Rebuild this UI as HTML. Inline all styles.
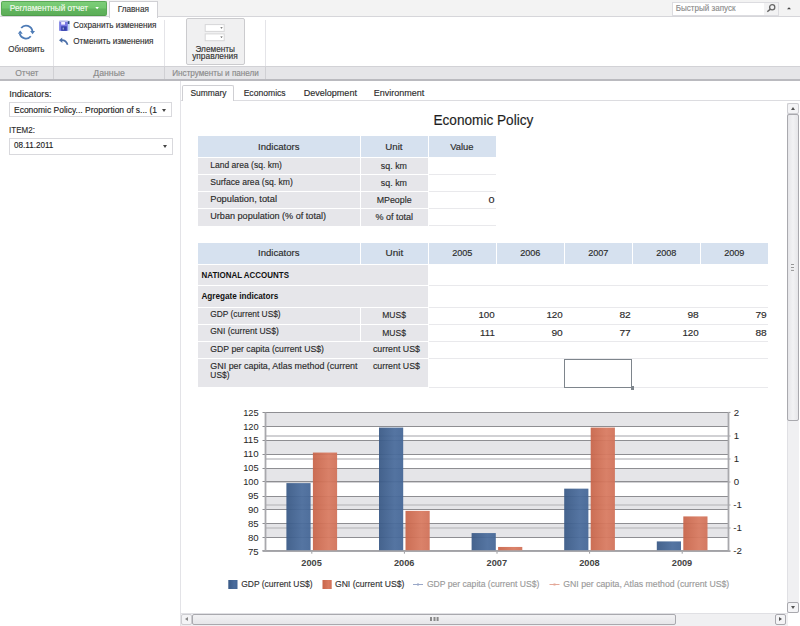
<!DOCTYPE html>
<html><head><meta charset="utf-8">
<style>
*{margin:0;padding:0;box-sizing:border-box}
html,body{width:800px;height:626px;overflow:hidden;background:#fff;font-family:"Liberation Sans",sans-serif;color:#2a2a2a}
.a{position:absolute}
</style></head><body>
<div class="a" style="left:0px;top:0px;width:800px;height:17px;background:#f3f3f3;border-bottom:1px solid #d6d6da"></div>
<div class="a" style="left:1px;top:1px;width:106px;height:15px;border-radius:2px;background:linear-gradient(#7ccd78,#72c76e 48%,#62b55e 52%,#5cae58);border:1px solid #5aa956;border-bottom-color:#4f9c4b"></div>
<div class="a" style="left:109px;top:1px;width:49px;height:17px;background:#fff;border:1px solid #d0d0d4;border-bottom:none"></div>
<div class="a" style="left:672px;top:2px;width:107px;height:14px;background:#fff;border:1px solid #dcdce0"></div>
<div class="a" style="left:764px;top:3px;width:14px;height:12px;background:#f2f2f3"></div>
<div class="a" style="left:53px;top:20px;width:1px;height:46px;background:#e4e4e8"></div>
<div class="a" style="left:164px;top:20px;width:1px;height:46px;background:#e4e4e8"></div>
<div class="a" style="left:265px;top:20px;width:1px;height:46px;background:#e4e4e8"></div>
<div class="a" style="left:0px;top:66px;width:800px;height:15px;background:#e5e5e8;border-top:1px solid #d2d2d6;border-bottom:2px solid #bababf"></div>
<div class="a" style="left:53px;top:67px;width:1px;height:12px;background:#d0d0d4"></div>
<div class="a" style="left:164px;top:67px;width:1px;height:12px;background:#d0d0d4"></div>
<div class="a" style="left:265px;top:67px;width:1px;height:12px;background:#d0d0d4"></div>
<div class="a" style="left:186px;top:18px;width:59px;height:47px;border:1px solid #cbcbce;border-radius:2px;background:#f0f0f1"></div>
<svg class="a" style="left:0;top:0" width="800" height="66" viewBox="0 0 800 66">
<g fill="none" stroke="#4d7bb6" stroke-width="1.8">
<path d="M21.2,28 A6.3,6.3 0 0 1 32.4,31.2"/>
<path d="M30.8,36.3 A6.3,6.3 0 0 1 19.8,33.9"/>
</g>
<g fill="#4d7bb6">
<path d="M30.1,30.9 L35,30.9 L32.6,34.3 Z"/>
<path d="M17.8,33.8 L22.7,33.8 L20.2,30.6 Z"/>
</g>
<!-- save -->
<rect x="59.2" y="20.8" width="10.6" height="10" rx="1" fill="#c4daf2"/>
<rect x="59.2" y="20.8" width="8.6" height="10" fill="#7a7ae4"/>
<rect x="59.2" y="20.8" width="10.6" height="1" fill="#c8cce8"/>
<rect x="61.2" y="22" width="3.8" height="2.6" fill="#f2f2ff"/>
<rect x="61.2" y="26.3" width="5.6" height="4.5" fill="#3440a8"/>
<rect x="62.6" y="27.6" width="1.4" height="2" fill="#9aa0d0"/>
<rect x="67.8" y="21.2" width="1.6" height="2.8" fill="#2a4a7a"/>
<!-- undo -->
<path d="M61.5,40.2 Q66,40 67.6,44.8" fill="none" stroke="#4a6ea8" stroke-width="1.7"/>
<path d="M59,40.3 L62.2,37.6 L62.4,43 Z" fill="#4a6ea8"/>
<!-- mini combos -->
<rect x="205.2" y="24.6" width="19" height="6.8" fill="#fff" stroke="#d6d6d8" stroke-width="1"/>
<rect x="205.2" y="33.9" width="19" height="6.8" fill="#fff" stroke="#d6d6d8" stroke-width="1"/>
<path d="M220.3,27.2 L222.7,27.2 L221.5,28.8 Z" fill="#555"/>
<path d="M220.3,36.5 L222.7,36.5 L221.5,38.1 Z" fill="#555"/>
<!-- search -->
<circle cx="772.2" cy="7.2" r="2.6" fill="none" stroke="#666" stroke-width="1.3"/>
<path d="M770.4,9.1 L767.3,11.8" stroke="#666" stroke-width="1.5"/>
<path d="M787,9.3 L791,9.3 L789,7.3 Z" fill="#444"/>
<path d="M95.3,7 L98.9,7 L97.1,9.2 Z" fill="#fff"/>
</svg>

<div class="a" style="left:180px;top:81px;width:1px;height:545px;background:#e3e3e7"></div>
<div class="a" style="left:9px;top:102px;width:163px;height:15px;border:1px solid #d9d9dd;background:#fff"></div>
<div class="a" style="left:162px;top:109px;border-left:2.5px solid transparent;border-right:2.5px solid transparent;border-top:3px solid #444"></div>
<div class="a" style="left:9px;top:138px;width:164px;height:17px;border:1px solid #d9d9dd;background:#fff"></div>
<div class="a" style="left:162.5px;top:145px;border-left:2.5px solid transparent;border-right:2.5px solid transparent;border-top:3px solid #444"></div>
<div class="a" style="left:181px;top:100px;width:619px;height:1px;background:#dcdce0"></div>
<div class="a" style="left:182px;top:85px;width:52px;height:16px;background:#fff;border:1px solid #cfcfd3;border-bottom:none;border-radius:2px 2px 0 0"></div>
<div class="a" style="left:198px;top:136px;width:162px;height:21px;background:#d6e1ef"></div>
<div class="a" style="left:361px;top:136px;width:67px;height:21px;background:#d6e1ef"></div>
<div class="a" style="left:429px;top:136px;width:67px;height:21px;background:#d6e1ef"></div>
<div class="a" style="left:198px;top:158px;width:162px;height:16px;background:#e6e6ea"></div>
<div class="a" style="left:361px;top:158px;width:67px;height:16px;background:#e6e6ea"></div>
<div class="a" style="left:429px;top:174px;width:67px;height:1px;background:#e9e9ec"></div>
<div class="a" style="left:198px;top:175px;width:162px;height:16px;background:#e6e6ea"></div>
<div class="a" style="left:361px;top:175px;width:67px;height:16px;background:#e6e6ea"></div>
<div class="a" style="left:429px;top:191px;width:67px;height:1px;background:#e9e9ec"></div>
<div class="a" style="left:198px;top:192px;width:162px;height:16px;background:#e6e6ea"></div>
<div class="a" style="left:361px;top:192px;width:67px;height:16px;background:#e6e6ea"></div>
<div class="a" style="left:429px;top:208px;width:67px;height:1px;background:#e9e9ec"></div>
<div class="a" style="left:198px;top:209px;width:162px;height:17px;background:#e6e6ea"></div>
<div class="a" style="left:361px;top:209px;width:67px;height:17px;background:#e6e6ea"></div>
<div class="a" style="left:429px;top:225px;width:67px;height:1px;background:#e9e9ec"></div>
<div class="a" style="left:198px;top:243px;width:162px;height:21px;background:#d6e1ef"></div>
<div class="a" style="left:361px;top:243px;width:67px;height:21px;background:#d6e1ef"></div>
<div class="a" style="left:429px;top:243px;width:67px;height:21px;background:#d6e1ef"></div>
<div class="a" style="left:497px;top:243px;width:67px;height:21px;background:#d6e1ef"></div>
<div class="a" style="left:565px;top:243px;width:67px;height:21px;background:#d6e1ef"></div>
<div class="a" style="left:633px;top:243px;width:67px;height:21px;background:#d6e1ef"></div>
<div class="a" style="left:701px;top:243px;width:67px;height:21px;background:#d6e1ef"></div>
<div class="a" style="left:198px;top:265px;width:230px;height:20px;background:#e6e6ea"></div>
<div class="a" style="left:198px;top:286px;width:230px;height:21px;background:#e6e6ea"></div>
<div class="a" style="left:198px;top:308px;width:162px;height:16px;background:#e6e6ea"></div>
<div class="a" style="left:361px;top:308px;width:67px;height:16px;background:#e6e6ea"></div>
<div class="a" style="left:198px;top:325px;width:162px;height:16px;background:#e6e6ea"></div>
<div class="a" style="left:361px;top:325px;width:67px;height:16px;background:#e6e6ea"></div>
<div class="a" style="left:198px;top:342px;width:230px;height:16px;background:#e6e6ea"></div>
<div class="a" style="left:198px;top:359px;width:230px;height:28px;background:#e6e6ea"></div>
<div class="a" style="left:429px;top:285px;width:339px;height:1px;background:#e9e9ec"></div>
<div class="a" style="left:429px;top:307px;width:339px;height:1px;background:#e9e9ec"></div>
<div class="a" style="left:429px;top:324px;width:339px;height:1px;background:#e9e9ec"></div>
<div class="a" style="left:429px;top:341px;width:339px;height:1px;background:#e9e9ec"></div>
<div class="a" style="left:429px;top:358px;width:339px;height:1px;background:#e9e9ec"></div>
<div class="a" style="left:429px;top:387px;width:339px;height:1px;background:#e9e9ec"></div>
<div class="a" style="left:564px;top:359px;width:68px;height:29px;border:1px solid #7e858c;border-bottom-width:1.5px"></div>
<div class="a" style="left:630.5px;top:386px;width:3.5px;height:3.5px;background:#7e858c"></div>
<svg class="a" style="left:0;top:0" width="800" height="626" viewBox="0 0 800 626">
<defs><linearGradient id="gb" x1="0" x2="1" y1="0" y2="0"><stop offset="0" stop-color="#395986"/><stop offset="0.65" stop-color="#4a6c9c"/><stop offset="1" stop-color="#446696"/></linearGradient>
<linearGradient id="gr" x1="0" x2="1" y1="0" y2="0"><stop offset="0" stop-color="#c8654a"/><stop offset="0.65" stop-color="#d87a60"/><stop offset="1" stop-color="#d17158"/></linearGradient></defs>
<rect x="265.5" y="412.5" width="463.0" height="14.0" fill="#e5e5e8"/>
<rect x="265.5" y="440.5" width="463.0" height="14.0" fill="#e5e5e8"/>
<rect x="265.5" y="468.5" width="463.0" height="13.0" fill="#e5e5e8"/>
<rect x="265.5" y="496.5" width="463.0" height="13.0" fill="#e5e5e8"/>
<rect x="265.5" y="523.5" width="463.0" height="14.0" fill="#e5e5e8"/>
<line x1="265.5" x2="730.5" y1="436" y2="436" stroke="#c2c2c6" stroke-width="1.5"/>
<line x1="265.5" x2="730.5" y1="459" y2="459" stroke="#c2c2c6" stroke-width="1.5"/>
<line x1="265.5" x2="730.5" y1="482" y2="482" stroke="#c2c2c6" stroke-width="1.5"/>
<line x1="265.5" x2="730.5" y1="505" y2="505" stroke="#c2c2c6" stroke-width="1.5"/>
<line x1="265.5" x2="730.5" y1="528" y2="528" stroke="#c2c2c6" stroke-width="1.5"/>
<line x1="262.5" x2="728.5" y1="412.5" y2="412.5" stroke="#8e8e92" stroke-width="1"/>
<line x1="262.5" x2="728.5" y1="426.5" y2="426.5" stroke="#8e8e92" stroke-width="1"/>
<line x1="262.5" x2="728.5" y1="440.5" y2="440.5" stroke="#8e8e92" stroke-width="1"/>
<line x1="262.5" x2="728.5" y1="454.5" y2="454.5" stroke="#8e8e92" stroke-width="1"/>
<line x1="262.5" x2="728.5" y1="468.5" y2="468.5" stroke="#8e8e92" stroke-width="1"/>
<line x1="262.5" x2="728.5" y1="481.5" y2="481.5" stroke="#8e8e92" stroke-width="1"/>
<line x1="262.5" x2="728.5" y1="496.5" y2="496.5" stroke="#8e8e92" stroke-width="1"/>
<line x1="262.5" x2="728.5" y1="509.5" y2="509.5" stroke="#8e8e92" stroke-width="1"/>
<line x1="262.5" x2="728.5" y1="523.5" y2="523.5" stroke="#8e8e92" stroke-width="1"/>
<line x1="262.5" x2="728.5" y1="537.5" y2="537.5" stroke="#8e8e92" stroke-width="1"/>
<line x1="262.5" x2="728.5" y1="550.5" y2="550.5" stroke="#8e8e92" stroke-width="1"/>
<line x1="728.5" x2="730.5" y1="412.4" y2="412.4" stroke="#8e8e92" stroke-width="1"/>
<rect x="286.40" y="483.10" width="24.2" height="68.10" fill="url(#gb)" opacity="0.94"/>
<rect x="312.90" y="452.56" width="24.2" height="98.64" fill="url(#gr)" opacity="0.94"/>
<line x1="311.80" x2="311.80" y1="551.2" y2="553.7" stroke="#9a9a9e" stroke-width="1"/>
<rect x="379.00" y="427.58" width="24.2" height="123.62" fill="url(#gb)" opacity="0.94"/>
<rect x="405.50" y="510.86" width="24.2" height="40.34" fill="url(#gr)" opacity="0.94"/>
<line x1="404.40" x2="404.40" y1="551.2" y2="553.7" stroke="#9a9a9e" stroke-width="1"/>
<rect x="471.60" y="533.07" width="24.2" height="18.13" fill="url(#gb)" opacity="0.94"/>
<rect x="498.10" y="546.95" width="24.2" height="4.25" fill="url(#gr)" opacity="0.94"/>
<line x1="497.00" x2="497.00" y1="551.2" y2="553.7" stroke="#9a9a9e" stroke-width="1"/>
<rect x="564.20" y="488.65" width="24.2" height="62.55" fill="url(#gb)" opacity="0.94"/>
<rect x="590.70" y="427.58" width="24.2" height="123.62" fill="url(#gr)" opacity="0.94"/>
<line x1="589.60" x2="589.60" y1="551.2" y2="553.7" stroke="#9a9a9e" stroke-width="1"/>
<rect x="656.80" y="541.40" width="24.2" height="9.80" fill="url(#gb)" opacity="0.94"/>
<rect x="683.30" y="516.41" width="24.2" height="34.79" fill="url(#gr)" opacity="0.94"/>
<line x1="682.20" x2="682.20" y1="551.2" y2="553.7" stroke="#9a9a9e" stroke-width="1"/>
<line x1="265.5" x2="265.5" y1="412.4" y2="551.2" stroke="#a8a8ac" stroke-width="1.8"/>
<line x1="728.5" x2="728.5" y1="412.4" y2="551.2" stroke="#a8a8ac" stroke-width="1.8"/>
<line x1="262.5" x2="730.5" y1="551.2" y2="551.2" stroke="#a8a8ac" stroke-width="1.8"/>
<rect x="228.3" y="580" width="9.2" height="9" fill="url(#gb)"/>
<rect x="322.5" y="580" width="9.2" height="9" fill="url(#gr)"/>
<line x1="413" x2="423" y1="584.5" y2="584.5" stroke="#9aa8c8" stroke-width="1"/><rect x="417" y="583.5" width="2" height="2" fill="#9aa8c8"/>
<line x1="549.5" x2="559.5" y1="584.5" y2="584.5" stroke="#e4a898" stroke-width="1"/><rect x="553.5" y="583.5" width="2" height="2" fill="#e4a898"/>
</svg>
<div class="a" style="left:787px;top:103px;width:12px;height:510px;background:#f0f0f2;border-left:1px solid #e0e0e4"></div>
<div class="a" style="left:787px;top:103px;width:12px;height:11px;background:#f4f4f6;border:1px solid #cdcdd1;border-radius:2px"></div>
<div class="a" style="left:791px;top:107px;border-left:2.5px solid transparent;border-right:2.5px solid transparent;border-bottom:3px solid #555"></div>
<div class="a" style="left:787px;top:114px;width:12px;height:307px;background:linear-gradient(90deg,#e6e6e9,#f2f2f4 50%,#e6e6e9);border:1px solid #a9a9ae;border-radius:2px"></div>
<div class="a" style="left:787px;top:602px;width:12px;height:11px;background:#f4f4f6;border:1px solid #a9a9ae;border-radius:2px"></div>
<div class="a" style="left:791px;top:606px;border-left:2.5px solid transparent;border-right:2.5px solid transparent;border-top:3px solid #555"></div>
<div class="a" style="left:181px;top:613px;width:607px;height:13px;background:#f0f0f2;border-top:1px solid #e0e0e4"></div>
<div class="a" style="left:181px;top:614px;width:11px;height:11px;background:#f4f4f6;border:1px solid #cdcdd1;border-radius:2px"></div>
<div class="a" style="left:185px;top:617px;border-top:2.5px solid transparent;border-bottom:2.5px solid transparent;border-right:3px solid #888"></div>
<div class="a" style="left:192px;top:614px;width:484px;height:11px;background:linear-gradient(#f2f2f4,#e6e6e9);border:1px solid #a9a9ae;border-radius:2px"></div>
<div class="a" style="left:430.2px;top:617px;width:1.5px;height:4px;background:#8a8a8a;box-shadow:3.5px 0 #8a8a8a,6.6px 0 #8a8a8a"></div>
<div class="a" style="left:790.6px;top:264.3px;width:3.6px;height:1.1px;background:#969696;box-shadow:0 3px #969696,0 5.9px #969696"></div>
<div class="a" style="left:775px;top:614px;width:11px;height:11px;background:#f4f4f6;border:1px solid #a9a9ae;border-radius:2px"></div>
<div class="a" style="left:779px;top:617px;border-top:2.5px solid transparent;border-bottom:2.5px solid transparent;border-left:3px solid #555"></div>
<div class="a" style="left:788px;top:613px;width:12px;height:13px;background:#fff"></div>
<svg class="a" style="left:0;top:0" width="800" height="626" viewBox="0 0 800 626" font-family="Liberation Sans">
<text x="9.86" y="10.90" font-size="9.03" fill="#f4fbef" stroke="#f4fbef" stroke-width="0.15" textLength="78.18" lengthAdjust="spacingAndGlyphs">Регламентный отчет</text>
<text x="117.66" y="11.80" font-size="9.03" fill="#333" stroke="#333" stroke-width="0.15" textLength="31.28" lengthAdjust="spacingAndGlyphs">Главная</text>
<text x="675.76" y="11.30" font-size="9.03" fill="#8c8c8c" stroke="#8c8c8c" stroke-width="0.15" textLength="59.78" lengthAdjust="spacingAndGlyphs">Быстрый запуск</text>
<text x="8.27" y="51.70" font-size="8.82" fill="#333" stroke="#333" stroke-width="0.15" textLength="36.16" lengthAdjust="spacingAndGlyphs">Обновить</text>
<text x="73.28" y="27.80" font-size="8.61" fill="#333" stroke="#333" stroke-width="0.15" textLength="83.03" lengthAdjust="spacingAndGlyphs">Сохранить изменения</text>
<text x="73.28" y="43.90" font-size="8.61" fill="#333" stroke="#333" stroke-width="0.15" textLength="80.23" lengthAdjust="spacingAndGlyphs">Отменить изменения</text>
<text x="195.47" y="52.00" font-size="8.82" fill="#333" stroke="#333" stroke-width="0.15" textLength="39.56" lengthAdjust="spacingAndGlyphs">Элементы</text>
<text x="192.17" y="58.80" font-size="8.82" fill="#333" stroke="#333" stroke-width="0.15" textLength="45.66" lengthAdjust="spacingAndGlyphs">управления</text>
<text x="15.18" y="76.40" font-size="8.61" fill="#8a8a8a" stroke="#8a8a8a" stroke-width="0.15" textLength="23.33" lengthAdjust="spacingAndGlyphs">Отчет</text>
<text x="93.28" y="76.40" font-size="8.61" fill="#8a8a8a" stroke="#8a8a8a" stroke-width="0.15" textLength="31.53" lengthAdjust="spacingAndGlyphs">Данные</text>
<text x="172.28" y="76.40" font-size="8.61" fill="#8a8a8a" stroke="#8a8a8a" stroke-width="0.15" textLength="86.53" lengthAdjust="spacingAndGlyphs">Инструменты и панели</text>
<text x="9.22" y="97.00" font-size="9.66" fill="#2b2b2b" stroke="#2b2b2b" stroke-width="0.15" textLength="42.36" lengthAdjust="spacingAndGlyphs">Indicators:</text>
<text x="14.03" y="112.80" font-size="9.45" fill="#222" stroke="#222" stroke-width="0.15" textLength="143.03" lengthAdjust="spacingAndGlyphs">Economic Policy... Proportion of s... (1</text>
<text x="9.12" y="133.00" font-size="9.66" fill="#2b2b2b" stroke="#2b2b2b" stroke-width="0.15" textLength="25.76" lengthAdjust="spacingAndGlyphs">ITEM2:</text>
<text x="14.03" y="148.40" font-size="9.45" fill="#222" stroke="#222" stroke-width="0.15" textLength="39.33" lengthAdjust="spacingAndGlyphs">08.11.2011</text>
<text x="190.45" y="96.20" font-size="9.24" fill="#2b2b2b" stroke="#2b2b2b" stroke-width="0.15" textLength="36.11" lengthAdjust="spacingAndGlyphs">Summary</text>
<text x="243.65" y="96.20" font-size="9.24" fill="#2b2b2b" stroke="#2b2b2b" stroke-width="0.15" textLength="42.01" lengthAdjust="spacingAndGlyphs">Economics</text>
<text x="303.65" y="96.20" font-size="9.24" fill="#2b2b2b" stroke="#2b2b2b" stroke-width="0.15" textLength="53.31" lengthAdjust="spacingAndGlyphs">Development</text>
<text x="373.85" y="96.20" font-size="9.24" fill="#2b2b2b" stroke="#2b2b2b" stroke-width="0.15" textLength="50.51" lengthAdjust="spacingAndGlyphs">Environment</text>
<text x="433.44" y="124.50" font-size="14.28" fill="#1e1e1e" stroke="#1e1e1e" stroke-width="0.15" textLength="99.91" lengthAdjust="spacingAndGlyphs">Economic Policy</text>
<text x="258.03" y="149.80" font-size="9.45" fill="#2b2b2b" stroke="#2b2b2b" stroke-width="0.15" textLength="41.43" lengthAdjust="spacingAndGlyphs">Indicators</text>
<text x="385.33" y="150.00" font-size="9.45" fill="#2b2b2b" stroke="#2b2b2b" stroke-width="0.15" textLength="17.23" lengthAdjust="spacingAndGlyphs">Unit</text>
<text x="450.13" y="150.00" font-size="9.45" fill="#2b2b2b" stroke="#2b2b2b" stroke-width="0.15" textLength="23.33" lengthAdjust="spacingAndGlyphs">Value</text>
<text x="210.23" y="167.80" font-size="9.45" fill="#2b2b2b" stroke="#2b2b2b" stroke-width="0.15" textLength="71.73" lengthAdjust="spacingAndGlyphs">Land area (sq. km)</text>
<text x="380.83" y="169.30" font-size="9.45" fill="#2b2b2b" stroke="#2b2b2b" stroke-width="0.15" textLength="26.13" lengthAdjust="spacingAndGlyphs">sq. km</text>
<text x="210.23" y="185.00" font-size="9.45" fill="#2b2b2b" stroke="#2b2b2b" stroke-width="0.15" textLength="82.63" lengthAdjust="spacingAndGlyphs">Surface area (sq. km)</text>
<text x="380.83" y="185.90" font-size="9.45" fill="#2b2b2b" stroke="#2b2b2b" stroke-width="0.15" textLength="26.13" lengthAdjust="spacingAndGlyphs">sq. km</text>
<text x="210.23" y="201.90" font-size="9.45" fill="#2b2b2b" stroke="#2b2b2b" stroke-width="0.15" textLength="66.73" lengthAdjust="spacingAndGlyphs">Population, total</text>
<text x="376.63" y="203.40" font-size="9.45" fill="#2b2b2b" stroke="#2b2b2b" stroke-width="0.15" textLength="35.03" lengthAdjust="spacingAndGlyphs">MPeople</text>
<text x="488.43" y="203.40" font-size="9.45" fill="#2b2b2b" stroke="#2b2b2b" stroke-width="0.15" textLength="6.03" lengthAdjust="spacingAndGlyphs">0</text>
<text x="210.23" y="218.80" font-size="9.45" fill="#2b2b2b" stroke="#2b2b2b" stroke-width="0.15" textLength="115.83" lengthAdjust="spacingAndGlyphs">Urban population (% of total)</text>
<text x="375.53" y="220.40" font-size="9.45" fill="#2b2b2b" stroke="#2b2b2b" stroke-width="0.15" textLength="37.53" lengthAdjust="spacingAndGlyphs">% of total</text>
<text x="258.03" y="256.00" font-size="9.45" fill="#2b2b2b" stroke="#2b2b2b" stroke-width="0.15" textLength="41.43" lengthAdjust="spacingAndGlyphs">Indicators</text>
<text x="385.53" y="256.00" font-size="9.45" fill="#2b2b2b" stroke="#2b2b2b" stroke-width="0.15" textLength="17.63" lengthAdjust="spacingAndGlyphs">Unit</text>
<text x="452.13" y="256.00" font-size="9.45" fill="#2b2b2b" stroke="#2b2b2b" stroke-width="0.15" textLength="20.33" lengthAdjust="spacingAndGlyphs">2005</text>
<text x="520.13" y="256.00" font-size="9.45" fill="#2b2b2b" stroke="#2b2b2b" stroke-width="0.15" textLength="20.33" lengthAdjust="spacingAndGlyphs">2006</text>
<text x="588.13" y="256.00" font-size="9.45" fill="#2b2b2b" stroke="#2b2b2b" stroke-width="0.15" textLength="20.33" lengthAdjust="spacingAndGlyphs">2007</text>
<text x="656.13" y="256.00" font-size="9.45" fill="#2b2b2b" stroke="#2b2b2b" stroke-width="0.15" textLength="20.33" lengthAdjust="spacingAndGlyphs">2008</text>
<text x="724.13" y="256.00" font-size="9.45" fill="#2b2b2b" stroke="#2b2b2b" stroke-width="0.15" textLength="20.33" lengthAdjust="spacingAndGlyphs">2009</text>
<text x="201.53" y="277.90" font-size="9.45" fill="#111" font-weight="bold" textLength="87.43" lengthAdjust="spacingAndGlyphs">NATIONAL ACCOUNTS</text>
<text x="201.43" y="299.10" font-size="9.45" fill="#111" font-weight="bold" textLength="76.83" lengthAdjust="spacingAndGlyphs">Agregate indicators</text>
<text x="210.23" y="317.30" font-size="9.45" fill="#2b2b2b" stroke="#2b2b2b" stroke-width="0.15" textLength="70.43" lengthAdjust="spacingAndGlyphs">GDP (current US$)</text>
<text x="210.23" y="334.20" font-size="9.45" fill="#2b2b2b" stroke="#2b2b2b" stroke-width="0.15" textLength="68.63" lengthAdjust="spacingAndGlyphs">GNI (current US$)</text>
<text x="382.23" y="318.40" font-size="9.45" fill="#2b2b2b" stroke="#2b2b2b" stroke-width="0.15" textLength="23.73" lengthAdjust="spacingAndGlyphs">MUS$</text>
<text x="382.23" y="335.70" font-size="9.45" fill="#2b2b2b" stroke="#2b2b2b" stroke-width="0.15" textLength="23.73" lengthAdjust="spacingAndGlyphs">MUS$</text>
<text x="478.43" y="318.40" font-size="9.45" fill="#2b2b2b" stroke="#2b2b2b" stroke-width="0.15" textLength="16.33" lengthAdjust="spacingAndGlyphs">100</text>
<text x="546.43" y="318.40" font-size="9.45" fill="#2b2b2b" stroke="#2b2b2b" stroke-width="0.15" textLength="16.33" lengthAdjust="spacingAndGlyphs">120</text>
<text x="619.43" y="318.40" font-size="9.45" fill="#2b2b2b" stroke="#2b2b2b" stroke-width="0.15" textLength="11.33" lengthAdjust="spacingAndGlyphs">82</text>
<text x="687.43" y="318.40" font-size="9.45" fill="#2b2b2b" stroke="#2b2b2b" stroke-width="0.15" textLength="11.33" lengthAdjust="spacingAndGlyphs">98</text>
<text x="755.43" y="318.40" font-size="9.45" fill="#2b2b2b" stroke="#2b2b2b" stroke-width="0.15" textLength="11.33" lengthAdjust="spacingAndGlyphs">79</text>
<text x="480.13" y="335.70" font-size="9.45" fill="#2b2b2b" stroke="#2b2b2b" stroke-width="0.15" textLength="14.63" lengthAdjust="spacingAndGlyphs">111</text>
<text x="551.43" y="335.70" font-size="9.45" fill="#2b2b2b" stroke="#2b2b2b" stroke-width="0.15" textLength="11.33" lengthAdjust="spacingAndGlyphs">90</text>
<text x="619.43" y="335.70" font-size="9.45" fill="#2b2b2b" stroke="#2b2b2b" stroke-width="0.15" textLength="11.33" lengthAdjust="spacingAndGlyphs">77</text>
<text x="682.43" y="335.70" font-size="9.45" fill="#2b2b2b" stroke="#2b2b2b" stroke-width="0.15" textLength="16.33" lengthAdjust="spacingAndGlyphs">120</text>
<text x="755.43" y="335.70" font-size="9.45" fill="#2b2b2b" stroke="#2b2b2b" stroke-width="0.15" textLength="11.33" lengthAdjust="spacingAndGlyphs">88</text>
<text x="210.33" y="351.50" font-size="9.45" fill="#2b2b2b" stroke="#2b2b2b" stroke-width="0.15" textLength="113.63" lengthAdjust="spacingAndGlyphs">GDP per capita (current US$)</text>
<text x="372.93" y="351.50" font-size="9.45" fill="#2b2b2b" stroke="#2b2b2b" stroke-width="0.15" textLength="47.03" lengthAdjust="spacingAndGlyphs">current US$</text>
<text x="210.33" y="368.90" font-size="9.45" fill="#2b2b2b" stroke="#2b2b2b" stroke-width="0.15" textLength="147.23" lengthAdjust="spacingAndGlyphs">GNI per capita, Atlas method (current</text>
<text x="210.33" y="377.90" font-size="9.45" fill="#2b2b2b" stroke="#2b2b2b" stroke-width="0.15" textLength="19.13" lengthAdjust="spacingAndGlyphs">US$)</text>
<text x="372.93" y="368.90" font-size="9.45" fill="#2b2b2b" stroke="#2b2b2b" stroke-width="0.15" textLength="47.03" lengthAdjust="spacingAndGlyphs">current US$</text>
<text x="243.16" y="415.70" font-size="9.03" fill="#262626" textLength="15.48" lengthAdjust="spacingAndGlyphs">125</text>
<text x="243.16" y="429.58" font-size="9.03" fill="#262626" textLength="15.48" lengthAdjust="spacingAndGlyphs">120</text>
<text x="243.16" y="443.46" font-size="9.03" fill="#262626" textLength="15.48" lengthAdjust="spacingAndGlyphs">115</text>
<text x="243.16" y="457.34" font-size="9.03" fill="#262626" textLength="15.48" lengthAdjust="spacingAndGlyphs">110</text>
<text x="243.16" y="471.22" font-size="9.03" fill="#262626" textLength="15.48" lengthAdjust="spacingAndGlyphs">105</text>
<text x="243.16" y="485.10" font-size="9.03" fill="#262626" textLength="15.48" lengthAdjust="spacingAndGlyphs">100</text>
<text x="247.96" y="498.98" font-size="9.03" fill="#262626" textLength="10.68" lengthAdjust="spacingAndGlyphs">95</text>
<text x="247.96" y="512.86" font-size="9.03" fill="#262626" textLength="10.68" lengthAdjust="spacingAndGlyphs">90</text>
<text x="247.96" y="526.74" font-size="9.03" fill="#262626" textLength="10.68" lengthAdjust="spacingAndGlyphs">85</text>
<text x="247.96" y="540.62" font-size="9.03" fill="#262626" textLength="10.68" lengthAdjust="spacingAndGlyphs">80</text>
<text x="247.96" y="554.50" font-size="9.03" fill="#262626" textLength="10.68" lengthAdjust="spacingAndGlyphs">75</text>
<text x="733.86" y="415.60" font-size="9.03" fill="#262626" textLength="5.38" lengthAdjust="spacingAndGlyphs">2</text>
<text x="733.86" y="438.73" font-size="9.03" fill="#262626" textLength="5.38" lengthAdjust="spacingAndGlyphs">1</text>
<text x="733.86" y="461.87" font-size="9.03" fill="#262626" textLength="5.38" lengthAdjust="spacingAndGlyphs">1</text>
<text x="733.86" y="485.00" font-size="9.03" fill="#262626" textLength="5.38" lengthAdjust="spacingAndGlyphs">0</text>
<text x="733.16" y="508.13" font-size="9.03" fill="#262626" textLength="8.68" lengthAdjust="spacingAndGlyphs">-1</text>
<text x="733.16" y="531.27" font-size="9.03" fill="#262626" textLength="8.68" lengthAdjust="spacingAndGlyphs">-1</text>
<text x="733.16" y="554.40" font-size="9.03" fill="#262626" textLength="8.68" lengthAdjust="spacingAndGlyphs">-2</text>
<text x="301.37" y="565.90" font-size="8.82" fill="#444" font-weight="bold" textLength="20.46" lengthAdjust="spacingAndGlyphs">2005</text>
<text x="393.97" y="565.90" font-size="8.82" fill="#444" font-weight="bold" textLength="20.46" lengthAdjust="spacingAndGlyphs">2006</text>
<text x="486.57" y="565.90" font-size="8.82" fill="#444" font-weight="bold" textLength="20.46" lengthAdjust="spacingAndGlyphs">2007</text>
<text x="579.17" y="565.90" font-size="8.82" fill="#444" font-weight="bold" textLength="20.46" lengthAdjust="spacingAndGlyphs">2008</text>
<text x="671.77" y="565.90" font-size="8.82" fill="#444" font-weight="bold" textLength="20.46" lengthAdjust="spacingAndGlyphs">2009</text>
<text x="241.25" y="587.20" font-size="9.24" fill="#333" stroke="#333" stroke-width="0.15" textLength="71.31" lengthAdjust="spacingAndGlyphs">GDP (current US$)</text>
<text x="334.95" y="587.20" font-size="9.24" fill="#333" stroke="#333" stroke-width="0.15" textLength="69.41" lengthAdjust="spacingAndGlyphs">GNI (current US$)</text>
<text x="426.95" y="587.20" font-size="9.24" fill="#9a9a9a" stroke="#9a9a9a" stroke-width="0.15" textLength="112.41" lengthAdjust="spacingAndGlyphs">GDP per capita (current US$)</text>
<text x="563.25" y="587.20" font-size="9.24" fill="#9a9a9a" stroke="#9a9a9a" stroke-width="0.15" textLength="166.01" lengthAdjust="spacingAndGlyphs">GNI per capita, Atlas method (current US$)</text>
</svg>
</body></html>
